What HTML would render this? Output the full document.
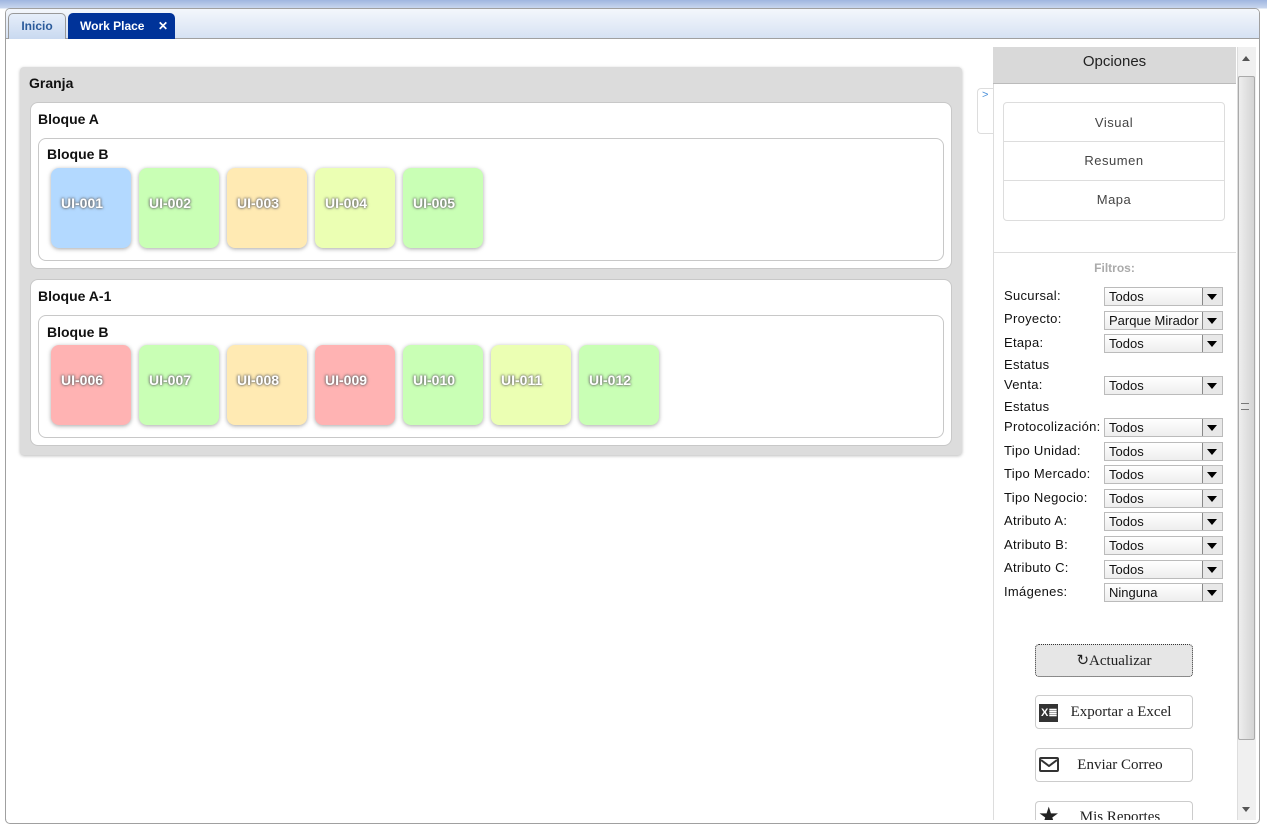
<!DOCTYPE html>
<html><head><meta charset="utf-8"><style>
*{box-sizing:border-box;margin:0;padding:0}
body{width:1267px;height:830px;overflow:hidden;background:linear-gradient(#9fb6e0,#c8d6ee 8px,#fff 9px);font-family:"Liberation Sans",Arial,sans-serif;position:relative}
.frame{position:absolute;left:5px;top:8px;width:1255px;height:816px;border:1px solid #a0a0a0;border-radius:5px;background:#fff;overflow:hidden}
.strip{position:absolute;left:0;top:0;right:0;height:30px;background:linear-gradient(#f4f7fc,#d6e2f3);border-bottom:1px solid #a0a0a0}
.tab{position:absolute;top:4px;height:26px;border:1px solid #999;border-bottom:none;border-radius:5px 5px 0 0;font-size:12px;font-weight:bold;line-height:24px}
.abs{position:absolute}
.panel{position:absolute;left:20px;top:67px;width:942px;height:388px;background:#dcdcdc;border-radius:4px;box-shadow:0 1px 3px #bbb}
.box{position:absolute;background:#fff;border:1px solid #c8c8c8;border-radius:8px}
.t{position:absolute;font-size:14px;font-weight:bold;color:#111}
.tile{position:absolute;width:80px;height:80px;border-radius:8px;box-shadow:0 1px 4px rgba(0,0,0,.35);color:#fff;font-weight:bold;font-size:14px;padding:27px 0 0 10px;text-shadow:0 0 3px #666,0 0 2px #666}
.b{background:#b3d9ff}.g{background:#c9ffb5}.o{background:#ffeab3}.y{background:#ebffb3}.r{background:#ffb3b3}
.lab{position:absolute;left:1004px;font-size:13px;color:#111;letter-spacing:.3px}
.sel{position:absolute;left:1104px;width:119px;height:19px;border:1px solid #bbb;background:linear-gradient(#fff,#eee);font-size:13px;line-height:17px;padding-left:4px;color:#111;overflow:hidden;white-space:nowrap}
.sel:after{content:"";position:absolute;right:0;top:0;width:19px;height:17px;background:#e8e8e8 ;border-left:1px solid #888}
.sel i{position:absolute;right:5px;top:6px;width:0;height:0;border-left:5px solid transparent;border-right:5px solid transparent;border-top:6px solid #000;z-index:2}
.btn{position:absolute;left:1035px;width:158px;height:34px;border:1px solid #ccc;border-radius:4px;background:#fff;font-family:"Liberation Serif",serif;font-size:15px;color:#222;text-align:center;line-height:32px}
</style></head><body>
<div class="frame">
<div class="strip">
<div class="tab" style="left:2px;width:58px;background:linear-gradient(#e6eefa,#c9d9f0);color:#2a5a9a;text-align:center">Inicio</div>
<div class="tab" style="left:62px;width:107px;background:#003399;color:#fff;border-color:#003399;padding-left:11px">Work Place<span style="position:absolute;right:6px">✕</span></div>
</div>
</div>
<div class="panel"></div>
<div class="t" style="left:29px;top:75px">Granja</div>
<div class="box" style="left:30px;top:102px;width:922px;height:167px"></div>
<div class="t" style="left:38px;top:111px">Bloque A</div>
<div class="box" style="left:38px;top:138px;width:906px;height:123px"></div>
<div class="t" style="left:47px;top:146px">Bloque B</div>
<div class="tile b" style="left:51px;top:168px">UI-001</div>
<div class="tile g" style="left:139px;top:168px">UI-002</div>
<div class="tile o" style="left:227px;top:168px">UI-003</div>
<div class="tile y" style="left:315px;top:168px">UI-004</div>
<div class="tile g" style="left:403px;top:168px">UI-005</div>
<div class="box" style="left:30px;top:279px;width:922px;height:167px"></div>
<div class="t" style="left:38px;top:288px">Bloque A-1</div>
<div class="box" style="left:38px;top:315px;width:906px;height:123px"></div>
<div class="t" style="left:47px;top:324px">Bloque B</div>
<div class="tile r" style="left:51px;top:345px">UI-006</div>
<div class="tile g" style="left:139px;top:345px">UI-007</div>
<div class="tile o" style="left:227px;top:345px">UI-008</div>
<div class="tile r" style="left:315px;top:345px">UI-009</div>
<div class="tile g" style="left:403px;top:345px">UI-010</div>
<div class="tile y" style="left:491px;top:345px">UI-011</div>
<div class="tile g" style="left:579px;top:345px">UI-012</div>

<div class="abs" style="left:977px;top:88px;width:18px;height:46px;border:1px solid #ddd;border-right:none;border-radius:4px 0 0 4px;background:#fff;color:#4a90d9;font-size:11px;padding-left:4px">&gt;</div>
<div class="abs" style="left:993px;top:47px;width:244px;height:777px;background:#fff;border-left:1px solid #ddd"></div>
<div class="abs" style="left:993px;top:47px;width:243px;height:37px;background:#d9d9d9;border-bottom:1px solid #bbb;font-size:15px;text-align:center;line-height:30px;color:#222">Opciones</div>
<div class="abs" style="left:1237px;top:47px;width:19px;height:773px;background:#f0f0f0;border-left:1px solid #ddd"></div>
<div class="abs" style="left:1238px;top:76px;width:17px;height:664px;background:linear-gradient(90deg,#eee,#d4d4d4);border:1px solid #aaa;border-radius:2px"></div>
<div class="abs" style="left:1242px;top:56px;border-left:4px solid transparent;border-right:4px solid transparent;border-bottom:5px solid #555"></div>
<div class="abs" style="left:1242px;top:807px;border-left:4px solid transparent;border-right:4px solid transparent;border-top:5px solid #555"></div>
<div class="abs" style="left:1241px;top:403px;width:8px;height:7px;border-top:1px solid #777;border-bottom:1px solid #777"></div>
<div class="abs" style="left:1003px;top:102px;width:222px;height:119px;border:1px solid #ddd;border-radius:4px;font-size:13px;color:#444;text-align:center;letter-spacing:.5px">
<div style="height:39px;line-height:40px;border-bottom:1px solid #ddd">Visual</div>
<div style="height:39px;line-height:38px;border-bottom:1px solid #ddd">Resumen</div>
<div style="height:39px;line-height:38px">Mapa</div></div>
<div class="abs" style="left:993px;top:252px;width:243px;border-top:1px solid #ddd"></div>
<div class="abs" style="left:993px;top:261px;width:243px;text-align:center;font-size:12px;font-weight:bold;color:#aaa">Filtros:</div>

<div class="lab" style="top:288px">Sucursal:</div><div class="sel" style="top:287px">Todos<i></i></div>
<div class="lab" style="top:311px">Proyecto:</div><div class="sel" style="top:311px">Parque Mirador<i></i></div>
<div class="lab" style="top:335px">Etapa:</div><div class="sel" style="top:334px">Todos<i></i></div>
<div class="lab" style="top:357px">Estatus</div>
<div class="lab" style="top:377px">Venta:</div><div class="sel" style="top:376px">Todos<i></i></div>
<div class="lab" style="top:399px">Estatus</div>
<div class="lab" style="top:419px">Protocolización:</div><div class="sel" style="top:418px">Todos<i></i></div>
<div class="lab" style="top:443px">Tipo Unidad:</div><div class="sel" style="top:442px">Todos<i></i></div>
<div class="lab" style="top:466px">Tipo Mercado:</div><div class="sel" style="top:465px">Todos<i></i></div>
<div class="lab" style="top:490px">Tipo Negocio:</div><div class="sel" style="top:489px">Todos<i></i></div>
<div class="lab" style="top:513px">Atributo A:</div><div class="sel" style="top:512px">Todos<i></i></div>
<div class="lab" style="top:537px">Atributo B:</div><div class="sel" style="top:536px">Todos<i></i></div>
<div class="lab" style="top:560px">Atributo C:</div><div class="sel" style="top:560px">Todos<i></i></div>
<div class="lab" style="top:584px">Imágenes:</div><div class="sel" style="top:583px">Ninguna<i></i></div>

<div class="btn" style="top:644px;height:33px;background:#e6e6e6;border:1px dotted #333">↻Actualizar</div>
<div class="btn" style="top:695px;padding-left:14px"><span style="position:absolute;left:3px;top:8px;width:19px;height:18px;background:#333;color:#fff;font-family:'Liberation Sans';font-size:11px;font-weight:bold;line-height:18px;text-align:left;padding-left:2px">X≣</span>Exportar a Excel</div>
<div class="btn" style="top:748px;padding-left:12px"><span style="position:absolute;left:3px;top:8px;width:20px;height:15px;border:2px solid #333;border-radius:2px"></span><svg style="position:absolute;left:4px;top:10px" width="18" height="8"><path d="M1 1 L9 7 L17 1" stroke="#333" stroke-width="2" fill="none"/></svg>Enviar Correo</div>
<div class="btn" style="top:801px;height:19px;border-bottom:none;border-radius:4px 4px 0 0;line-height:30px;overflow:hidden;padding-left:12px"><span style="position:absolute;left:2px;top:0;font-size:24px;line-height:30px;color:#222">★</span>Mis Reportes</div>
<div class="abs" style="left:0;top:820px;width:1267px;height:10px;background:#fff"></div>
<div class="abs" style="left:5px;top:814px;width:1255px;height:10px;border:1px solid #a0a0a0;border-top:none;border-radius:0 0 5px 5px"></div>
</body></html>
